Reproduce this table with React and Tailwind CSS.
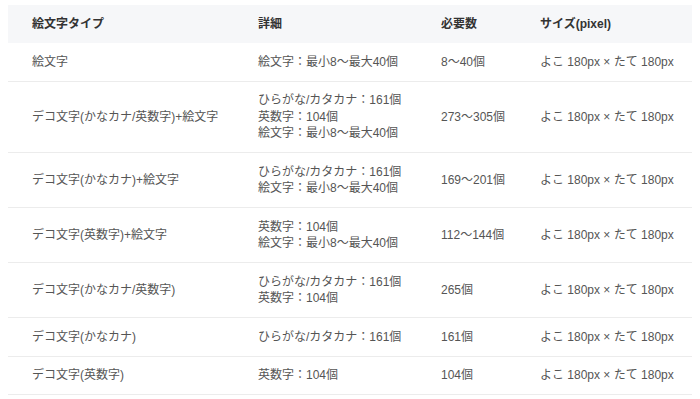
import React from 'react';

const rows = [
  { type: '絵文字', detail: ['絵文字：最小8～最大40個'], count: '8～40個' },
  {
    type: 'デコ文字(かなカナ/英数字)+絵文字',
    detail: ['ひらがな/カタカナ：161個', '英数字：104個', '絵文字：最小8～最大40個'],
    count: '273～305個',
  },
  {
    type: 'デコ文字(かなカナ)+絵文字',
    detail: ['ひらがな/カタカナ：161個', '絵文字：最小8～最大40個'],
    count: '169～201個',
  },
  {
    type: 'デコ文字(英数字)+絵文字',
    detail: ['英数字：104個', '絵文字：最小8～最大40個'],
    count: '112～144個',
  },
  {
    type: 'デコ文字(かなカナ/英数字)',
    detail: ['ひらがな/カタカナ：161個', '英数字：104個'],
    count: '265個',
  },
  { type: 'デコ文字(かなカナ)', detail: ['ひらがな/カタカナ：161個'], count: '161個' },
  { type: 'デコ文字(英数字)', detail: ['英数字：104個'], count: '104個' },
];

const cols = 'grid grid-cols-[226px_183px_99px_1fr]';
const cell = 'pl-6 whitespace-nowrap';

export default function App() {
  return (
    <div
      className="w-[700px] h-[399px] overflow-hidden bg-white pt-[5px] px-[8px] text-[12px] leading-[16.5px] text-[#555]"
      style={{ fontFamily: '"Liberation Sans", "Noto Sans CJK JP", sans-serif' }}
    >
      <div className={`${cols} bg-[#f6f7f9] h-[38px] items-center font-bold text-[#333]`}>
        <div className={cell}>絵文字タイプ</div>
        <div className={cell}>詳細</div>
        <div className={cell}>必要数</div>
        <div className={cell}>サイズ(pixel)</div>
      </div>
      {rows.map((r) => (
        <div key={r.type} className={`${cols} items-center border-b border-[#ececec] py-[10.5px]`}>
          <div className={cell}>{r.type}</div>
          <div className={cell}>
            {r.detail.map((d) => (
              <div key={d}>{d}</div>
            ))}
          </div>
          <div className={cell}>{r.count}</div>
          <div className={cell}>よこ 180px × たて 180px</div>
        </div>
      ))}
    </div>
  );
}
